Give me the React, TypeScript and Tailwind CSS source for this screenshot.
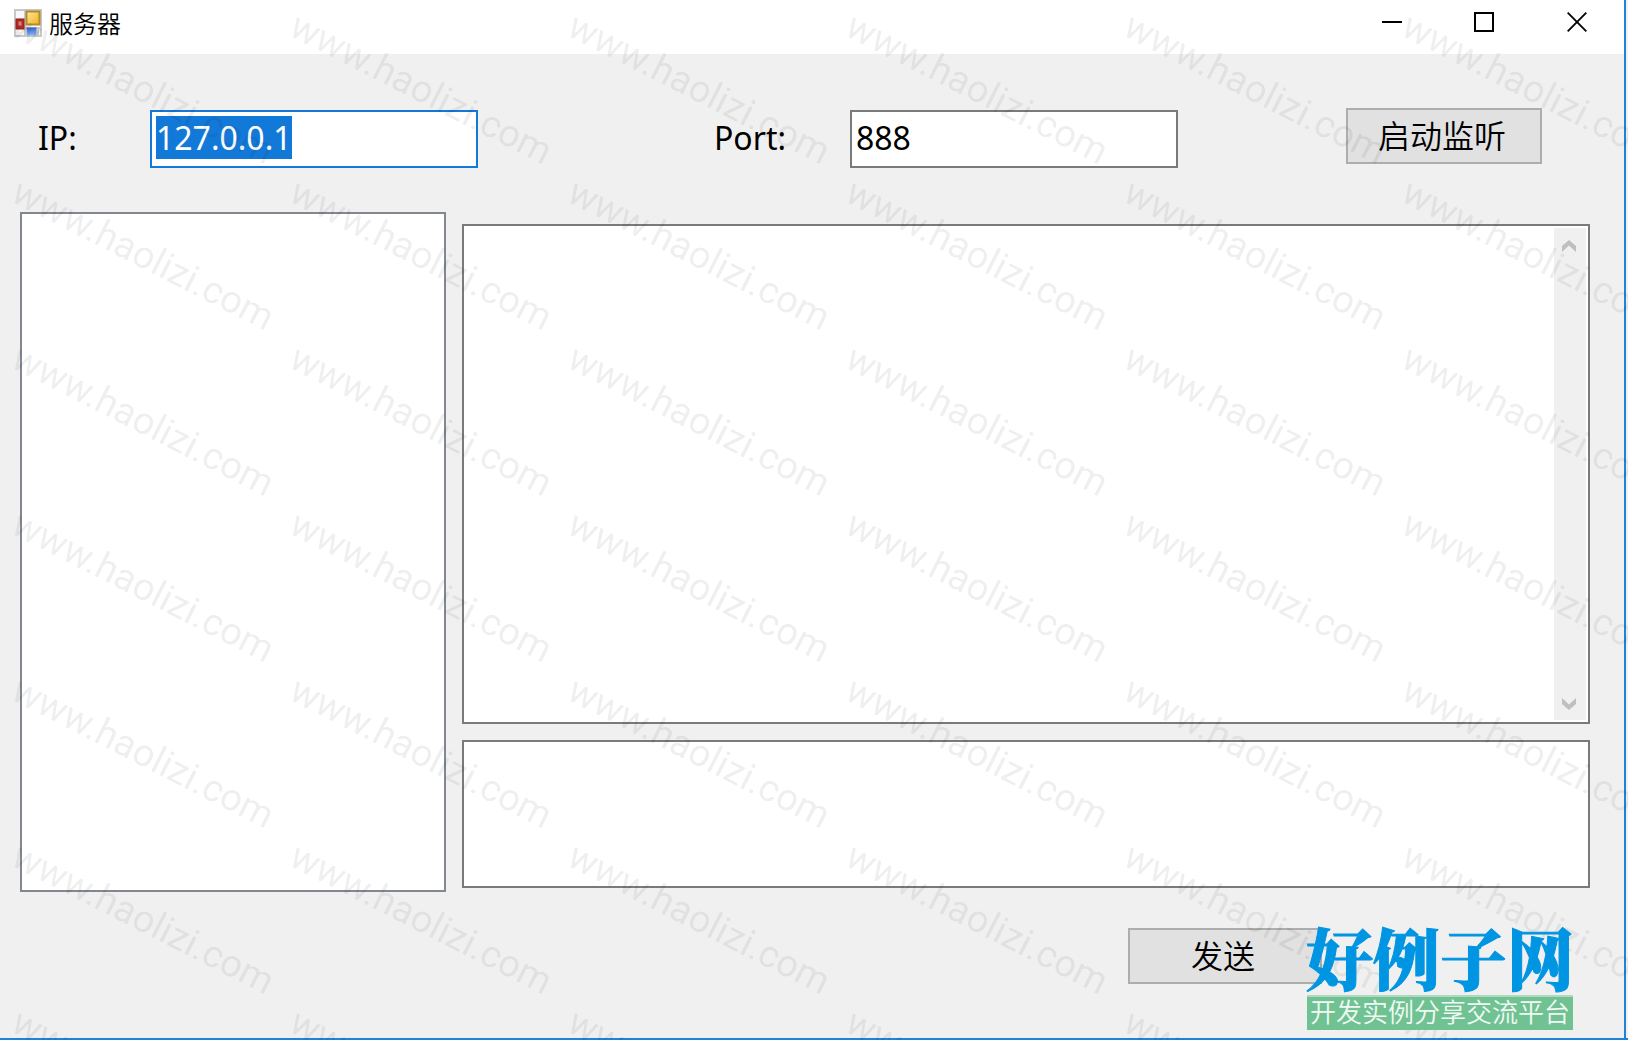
import React, { useEffect, useRef, useState } from "react";

const FormIcon: React.FC = () => (
  <svg className="w-7 h-7" viewBox="0 0 28 28" aria-hidden="true">
    <defs>
      <linearGradient id="gold" x1="0" y1="0" x2="1" y2="1">
        <stop offset="0" stopColor="#ffe9a0" />
        <stop offset="1" stopColor="#eeb01c" />
      </linearGradient>
      <linearGradient id="blue" x1="0" y1="0" x2="0" y2="1">
        <stop offset="0" stopColor="#2f62c8" />
        <stop offset="1" stopColor="#8fb8f5" />
      </linearGradient>
    </defs>
    <rect x="1" y="1" width="26" height="26" fill="#f8f8f8" stroke="#c8c8c8" strokeWidth="2" />
    <path d="M11 2v24M2 19h24M24 19v7" stroke="#c8c8c8" strokeWidth="2" />
    <rect x="12.5" y="2.5" width="13" height="13" fill="url(#gold)" stroke="#b58a2a" strokeWidth="2" />
    <rect x="2" y="10" width="8" height="10" fill="#b52a24" stroke="#8e1c18" strokeWidth="1" />
    <rect x="4.5" y="12.5" width="3" height="4" fill="#e08a84" />
    <rect x="12.5" y="18.5" width="10" height="8" fill="url(#blue)" />
  </svg>
);

const TitleBar: React.FC = () => (
  <header className="flex items-start justify-between h-[54px] bg-white">
    <div className="flex items-center gap-[7px] pl-[14px] h-[46px]">
      <FormIcon />
      <h1 className="pt-px text-2xl leading-8 font-[350] text-black">服务器</h1>
    </div>
    <div className="flex">
      <button type="button" aria-label="最小化" className="flex items-center justify-center w-[92px] h-11">
        <svg className="w-5 h-5" viewBox="0 0 20 20">
          <path d="M0 10h20" stroke="#000" strokeWidth="2" />
        </svg>
      </button>
      <button type="button" aria-label="最大化" className="flex items-center justify-center w-[92px] h-11">
        <svg className="w-5 h-5" viewBox="0 0 20 20">
          <rect x="1" y="1" width="18" height="18" fill="none" stroke="#000" strokeWidth="2" />
        </svg>
      </button>
      <button type="button" aria-label="关闭" className="flex items-center justify-center w-[94px] h-11">
        <svg className="w-5 h-5" viewBox="0 0 20 20">
          <path d="M.7.7l18.6 18.6M19.3.7L.7 19.3" stroke="#000" strokeWidth="1.8" />
        </svg>
      </button>
    </div>
  </header>
);

const Watermark: React.FC = () => (
  <div
    aria-hidden="true"
    className="absolute inset-0 overflow-hidden pointer-events-none select-none grid grid-cols-[repeat(6,278px)] auto-rows-[166px] pl-6 pt-[5px]"
  >
    {Array.from({ length: 42 }, (_, i) => (
      <span
        key={i}
        className="origin-top-left rotate-[27deg] whitespace-nowrap text-[38px] leading-10 text-black/8 font-[Roboto,sans-serif]"
      >
        www.haolizi.com
      </span>
    ))}
  </div>
);

const App: React.FC = () => {
  const [ip, setIp] = useState("127.0.0.1");
  const [port, setPort] = useState("888");
  const [log, setLog] = useState("");
  const [message, setMessage] = useState("");
  const ipRef = useRef<HTMLInputElement>(null);

  useEffect(() => {
    ipRef.current?.focus();
    ipRef.current?.select();
  }, []);

  return (
    <div className="relative flex flex-col min-h-screen overflow-hidden bg-[#f0f0f0] text-black font-['Noto_Sans','Noto_Sans_CJK_SC',sans-serif]">
      <div className="flex flex-col flex-1 border-b-2 border-[#1e84d8] pr-0.5">
        <div className="flex flex-col flex-1 border-r-2 border-[#1e84d8]">
          <TitleBar />

          <form
            className="flex flex-col flex-1"
            onSubmit={(e) => e.preventDefault()}
          >
            <div className="flex items-start justify-between pt-[54px] pl-[38px] pr-[82px]">
              <div className="flex items-center pt-0.5">
                <label htmlFor="ip" className="w-28 pb-0.5 text-[32px] leading-[42px]">
                  IP:
                </label>
                <input
                  id="ip"
                  ref={ipRef}
                  value={ip}
                  onChange={(e) => setIp(e.target.value)}
                  className="w-[328px] h-[58px] px-1 pt-1 pb-2 text-[32px] leading-[42px] bg-white border-2 border-[#7a7a7a] focus:border-[#1379d8] outline-none selection:bg-[#1379d8] selection:text-white"
                />
              </div>
              <div className="flex items-center pt-0.5 pl-[68px]">
                <label htmlFor="port" className="w-[136px] pb-0.5 text-[32px] leading-[42px]">
                  Port:
                </label>
                <input
                  id="port"
                  value={port}
                  onChange={(e) => setPort(e.target.value)}
                  className="w-[328px] h-[58px] px-1 pt-1 pb-2 text-[32px] leading-[42px] bg-white border-2 border-[#7a7a7a] focus:border-[#1379d8] outline-none"
                />
              </div>
              <button
                type="button"
                className="w-[196px] h-14 pr-1 text-[32px] leading-[42px] font-[350] bg-[#e1e1e1] border-2 border-[#adadad]"
              >
                启动监听
              </button>
            </div>

            <div className="flex gap-4 pt-11 pl-5 pr-[34px]">
              <ul
                aria-label="客户端"
                className="w-[426px] h-[680px] shrink-0 bg-white border-2 border-[#828790]"
              />
              <div className="flex flex-col flex-1 gap-4 pt-3">
                <div className="flex h-[500px] bg-white border-2 border-[#7a7a7a]">
                  <textarea
                    aria-label="消息记录"
                    value={log}
                    onChange={(e) => setLog(e.target.value)}
                    className="flex-1 p-1 text-[32px] leading-[42px] resize-none outline-none"
                  />
                  <div className="flex flex-col items-center justify-between w-8 my-0.5 mr-0.5 pt-3 pb-2.5 pr-0.5 bg-[#f0f0f0]">
                    <svg className="w-3.5 h-3" viewBox="0 0 14 12">
                      <path d="M7 0l7 6v6L7 5.500 0 12V6z" fill="#bfbfbf" />
                    </svg>
                    <svg className="w-3.5 h-3" viewBox="0 0 14 12">
                      <path d="M7 12l7-6V0L7 6.500 0 0v6z" fill="#bfbfbf" />
                    </svg>
                  </div>
                </div>
                <textarea
                  aria-label="消息"
                  value={message}
                  onChange={(e) => setMessage(e.target.value)}
                  className="block h-[148px] p-1 text-[32px] leading-[42px] bg-white border-2 border-[#7a7a7a] resize-none outline-none"
                />
              </div>
            </div>

            <div className="flex justify-end pt-9 pr-[302px]">
              <button
                type="submit"
                className="w-[194px] h-14 pr-1 text-[32px] leading-[42px] font-[350] bg-[#e1e1e1] border-2 border-[#adadad]"
              >
                发送
              </button>
            </div>
          </form>
        </div>
      </div>

      <Watermark />

      <div className="absolute right-[55px] bottom-[10px] w-[266px] flex flex-col items-center">
        <div className="whitespace-nowrap text-[67px] leading-[78px] font-black text-[#0095e2] [-webkit-text-stroke:1px_#0095e2] font-['Noto_Serif_CJK_SC','Noto_Sans_CJK_SC',serif]">
          好例子网
        </div>
        <div className="w-full h-[35px] text-center whitespace-nowrap text-[26px] leading-[31px] font-[350] text-[#f0faf4] bg-[#71c293] border-t-2 border-[#b0d8c0]">
          开发实例分享交流平台
        </div>
      </div>
    </div>
  );
};

export default App;
